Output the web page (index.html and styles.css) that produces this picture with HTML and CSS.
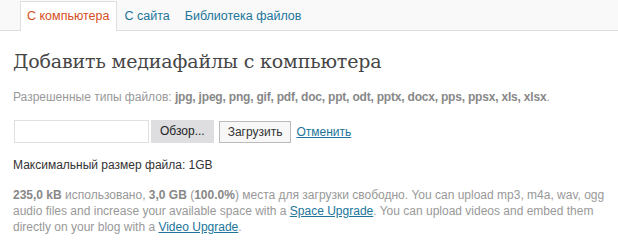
FILE: index.html
```html
<!DOCTYPE html>
<html lang="ru">
<head>
<meta charset="utf-8">
<link rel="stylesheet" href="styles.css">
</head>
<body>
<div class="tabs">
  <a class="tab active" href="#">С компьютера</a>
  <a class="tab" href="#">С сайта</a>
  <a class="tab" href="#">Библиотека файлов</a>
</div>
<div class="content">
  <h3 class="title">Добавить медиафайлы с компьютера</h3>
  <p class="types">Разрешенные типы файлов: <b>jpg, jpeg, png, gif, pdf, doc, ppt, odt, pptx, docx, pps, ppsx, xls, xlsx</b>.</p>
  <div class="upload">
    <span class="file-field"></span>
    <span class="browse">Обзор...</span>
    <button class="btn" type="button">Загрузить</button>
    <a class="cancel" href="#">Отменить</a>
  </div>
  <p class="max">Максимальный размер файла: 1GB</p>
  <p class="space"><b>235,0 kB</b> использовано, <b>3,0 GB</b> (<b>100.0%</b>) места для загрузки свободно. You can upload mp3, m4a, wav, ogg audio files and increase your available space with a <a href="#">Space Upgrade</a>. You can upload videos and embed them directly on your blog with a <a href="#">Video Upgrade</a>.</p>
</div>
</body>
</html>
```
FILE: styles.css
```css
* { box-sizing: border-box; }
body {
  margin: 0;
  background: #fff;
  font-family: "Liberation Sans", Arial, sans-serif;
  font-size: 12px;
  color: #333;
}
.tabs {
  display: flex;
  align-items: flex-end;
  height: 31px;
  padding: 1px 0 0 20px;
  background: #f9f9f9;
  border-bottom: 1px solid #dfdfdf;
}
.tab {
  display: block;
  height: 30px;
  padding: 0 7px 0 6px;
  line-height: 28px;
  font-size: 12.5px;
  color: #21759b;
  text-decoration: none;
  border: 1px solid transparent;
  border-bottom: 0;
  margin-bottom: -1px;
}
.tab.active {
  background: #fff;
  border-color: #dfdfdf;
  color: #d54e21;
}
.content {
  padding: 0 12px 0 13px;
}
.title {
  margin: 16px 0 0;
  font-family: "DejaVu Serif", Georgia, serif;
  font-weight: normal;
  font-size: 19px;
  letter-spacing: -0.15px;
  line-height: 28px;
  color: #464646;
}
.types {
  margin: 14px 0 0;
  color: #999;
  line-height: 16px;
}
.types b { color: #888; letter-spacing: -0.2px; }
.upload {
  display: flex;
  align-items: center;
  margin-top: 15px;
  height: 23px;
}
.file-field {
  display: block;
  width: 135px;
  height: 23px;
  border: 1px solid #dfdfdf;
  margin-left: 1px;
  background: #fff;
}
.browse {
  display: block;
  height: 23px;
  margin-left: 2px;
  padding: 0 9px;
  line-height: 23px;
  background: #dedee0;
  color: #222;
  font-size: 12px;
}
.btn {
  margin: 0 0 0 5px;
  height: 22px;
  padding: 0 8px;
  font-family: "Liberation Sans", Arial, sans-serif;
  font-size: 12px;
  color: #333;
  background: #f7f7f7;
  border: 1px solid #bbb;
  border-radius: 0;
}
.cancel {
  margin-left: 5px;
  color: #21759b;
}
.max {
  margin: 14px 0 0;
  line-height: 16px;
}
.space {
  margin: 14px 0 0;
  color: #999;
  line-height: 16px;
}
.space b { color: #888; }
.space a { color: #21759b; }
```
